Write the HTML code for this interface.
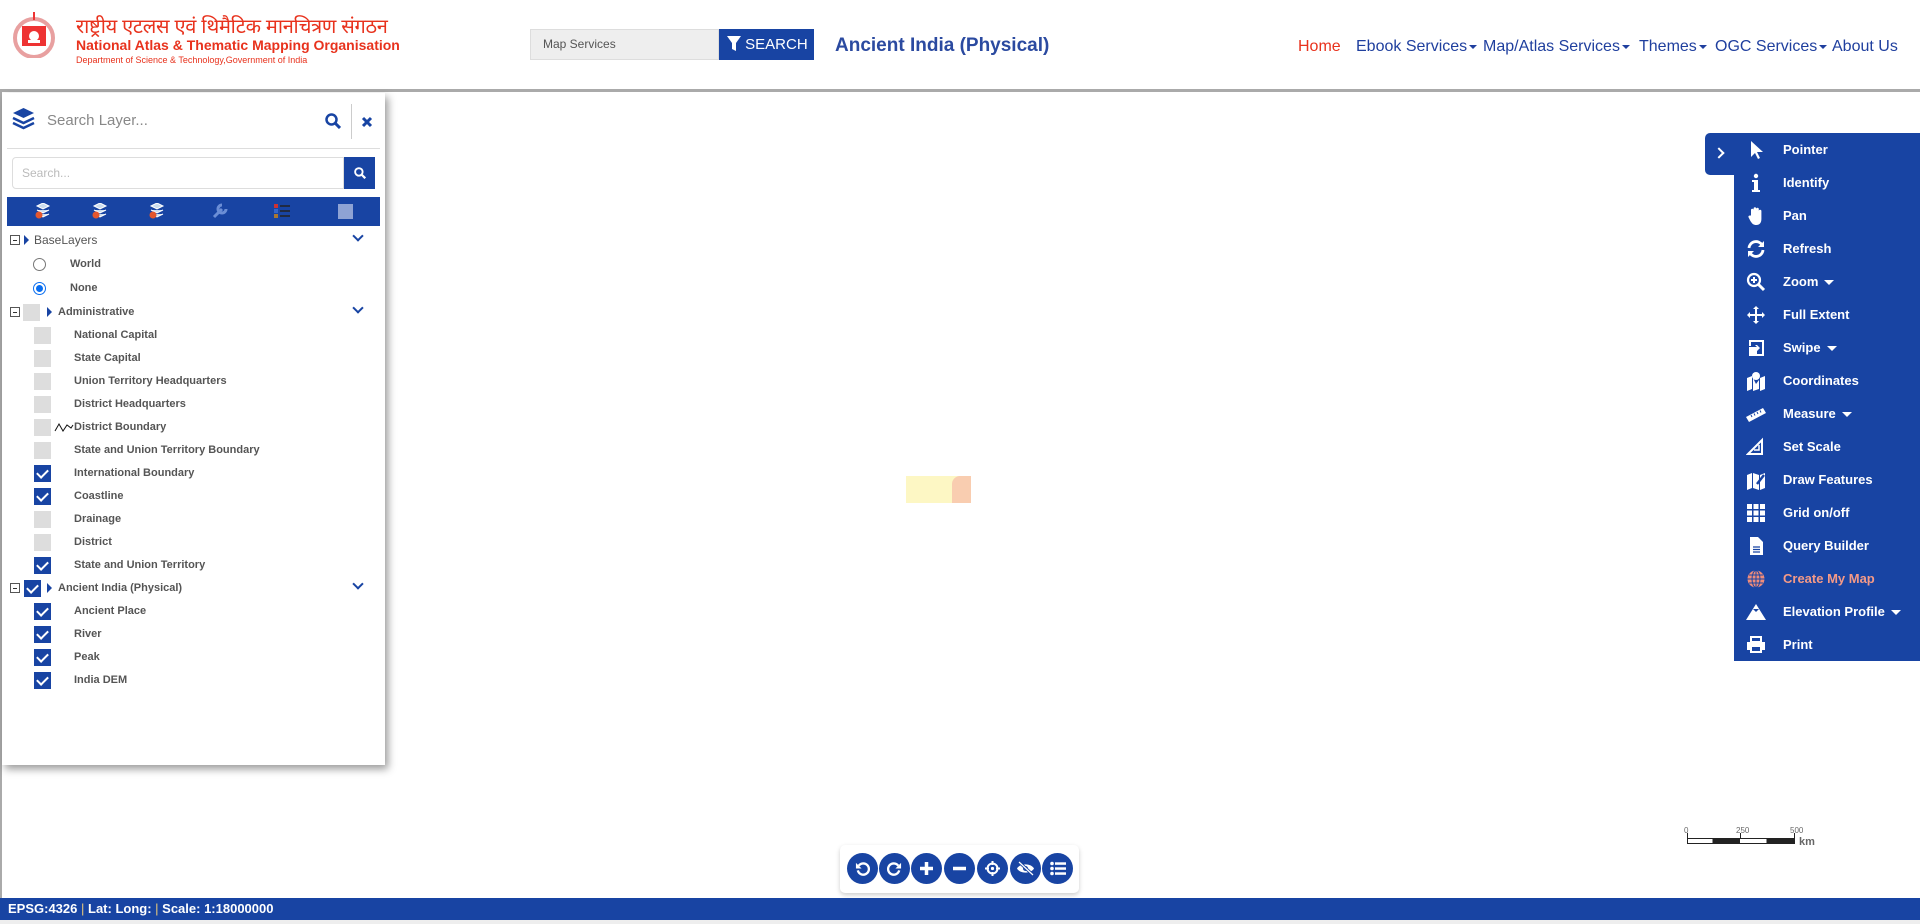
<!DOCTYPE html>
<html><head><meta charset="utf-8"><style>
*{box-sizing:border-box;margin:0;padding:0}
body{width:1920px;height:924px;overflow:hidden;background:#fff;font-family:"Liberation Sans",sans-serif;position:relative}
.a{position:absolute}
.blue{background:#1844a3}
.nav{position:absolute;top:38px;font-size:16px;color:#1f3f9e;white-space:nowrap}
.tri{display:inline-block;width:0;height:0;border-left:4px solid transparent;border-right:4px solid transparent;border-top:4px solid #1f3f9e;vertical-align:middle;margin-left:2px}
.row{position:absolute;left:0;width:380px;height:22px;font-size:11px;font-weight:bold;color:#555;line-height:22px}
.cb{position:absolute;left:32px;top:3px;width:17px;height:17px;background:#ddd}
.cb.on{background:#1844a3}
.cb.on:after{content:"";position:absolute;left:5px;top:2px;width:5px;height:9px;border:solid #fff;border-width:0 2px 2px 0;transform:rotate(45deg)}
.row .t{position:absolute;left:72px}
.mn{position:absolute;left:12px;top:6px;width:10px;height:10px;border:1px solid #555;background:#fff}
.mn:after{content:"";position:absolute;left:2px;top:3.5px;width:4px;height:1px;background:#333}
.ar{position:absolute;width:0;height:0;border-top:5px solid transparent;border-bottom:5px solid transparent;border-left:5px solid #1844a3;top:6px}
.chev{position:absolute;left:352px;top:3px;width:8px;height:8px;border:solid #1844a3;border-width:0 2.5px 2.5px 0;transform:rotate(45deg)}
.ti{position:absolute;left:0;width:186px;height:33px;color:#fff;font-size:13px;font-weight:bold;line-height:33px}
.ti .l{position:absolute;left:49px}
.ti .ic{position:absolute;left:12px;top:7px;width:20px;height:20px}
.wt{display:inline-block;width:0;height:0;border-left:5px solid transparent;border-right:5px solid transparent;border-top:5px solid #fff;vertical-align:middle;margin-left:6px}
.cir{position:absolute;top:853px;width:31px;height:31px;border-radius:50%;background:#1844a3}
</style></head><body>
<svg class="a" style="left:12px;top:10px" width="44" height="48" viewBox="0 0 44 48"><circle cx="22" cy="28" r="19" fill="none" stroke="#e8a0a0" stroke-width="4"/><rect x="21" y="2" width="2" height="8" fill="#e33"/><path d="M10 16h24v20h-24z" fill="#e33"/><circle cx="22" cy="26" r="5" fill="#fff"/><rect x="16" y="30" width="12" height="3" fill="#fff"/></svg>
<div class="a" style="left:76px;top:12px;font-size:20px;color:#e8321d;font-family:'Liberation Sans','Noto Sans CJK SC',sans-serif;white-space:nowrap;letter-spacing:-0.3px">राष्ट्रीय एटलस एवं थिमैटिक मानचित्रण संगठन</div>
<div class="a" style="left:76px;top:37px;font-size:14px;font-weight:bold;color:#e8321d;white-space:nowrap">National Atlas &amp; Thematic Mapping Organisation</div>
<div class="a" style="left:76px;top:55px;font-size:9px;color:#e8321d;white-space:nowrap">Department of Science &amp; Technology,Government of India</div>
<div class="a" style="left:530px;top:29px;width:189px;height:31px;background:#eee;border:1px solid #ddd;font-size:12px;color:#555;line-height:29px;padding-left:12px">Map Services</div>
<div class="a blue" style="left:719px;top:29px;width:95px;height:31px;color:#fff;font-size:15px;line-height:31px;padding-left:8px"><svg width="14" height="15" viewBox="0 0 14 15" style="vertical-align:-2px"><path d="M0 0h14l-5 7v8l-4-2v-6z" fill="#fff"/></svg> SEARCH</div>
<div class="a" style="left:835px;top:35px;font-size:19px;font-weight:bold;color:#2b4aa0;white-space:nowrap">Ancient India (Physical)</div>
<div class="nav" style="left:1298px;color:#e8321d">Home</div>
<div class="nav" style="left:1356px">Ebook Services<span class="tri"></span></div>
<div class="nav" style="left:1483px">Map/Atlas Services<span class="tri"></span></div>
<div class="nav" style="left:1639px">Themes<span class="tri"></span></div>
<div class="nav" style="left:1715px">OGC Services<span class="tri"></span></div>
<div class="nav" style="left:1832px">About Us</div>
<div class="a" style="left:0;top:89px;width:1920px;height:3px;background:#aaa"></div>
<div class="a" style="left:0;top:92px;width:2px;height:808px;background:#aaa"></div>
<div class="a" style="left:906px;top:476px;width:65px;height:27px;background:#fdf7c4"></div>
<div class="a" style="left:952px;top:476px;width:19px;height:27px;background:#f9cdb0;border-radius:8px 0 0 0"></div>
<div class="a" style="left:2px;top:93px;width:383px;height:672px;background:#fff;box-shadow:3px 4px 8px rgba(0,0,0,.4)">
 <svg class="a" style="left:10px;top:14px" width="23" height="24" viewBox="0 0 23 24"><path d="M11.5 1L22 6l-10.5 5L1 6z" fill="#1844a3"/><path d="M1 11l10.5 5 10.5-5M1 16l10.5 5 10.5-5" fill="none" stroke="#1844a3" stroke-width="2.5"/></svg>
 <div class="a" style="left:45px;top:19px;font-size:15px;color:#888">Search Layer...</div>
 <svg class="a" style="left:323px;top:20px" width="16" height="16" viewBox="0 0 16 16"><circle cx="6.5" cy="6.5" r="5" fill="none" stroke="#1844a3" stroke-width="2.5"/><path d="M10 10l5 5" stroke="#1844a3" stroke-width="3"/></svg>
 <div class="a" style="left:349px;top:11px;width:1px;height:35px;background:#ccc"></div>
 <svg class="a" style="left:359px;top:23px" width="12" height="12"><path d="M2 2l8 8M10 2l-8 8" stroke="#1844a3" stroke-width="3"/></svg>
 <div class="a" style="left:5px;top:55px;width:373px;height:1px;background:#ddd"></div>
 <div class="a" style="left:10px;top:64px;width:332px;height:32px;border:1px solid #ddd;border-radius:4px 0 0 4px;font-size:12px;color:#bbb;line-height:30px;padding-left:9px">Search...</div>
 <div class="a blue" style="left:342px;top:64px;width:31px;height:32px"><svg class="a" style="left:10px;top:10px" width="12" height="12" viewBox="0 0 16 16"><circle cx="6.5" cy="6.5" r="5" fill="none" stroke="#fff" stroke-width="2.5"/><path d="M10 10l5 5" stroke="#fff" stroke-width="3"/></svg></div>
 <div class="a blue" style="left:5px;top:104px;width:373px;height:29px">
  <svg class="a" style="left:28px;top:6px" width="16" height="16"><path d="M2 3l6-3 6 3-6 3z M2 7l6 3 6-3 M2 11l6 3 6-3" fill="#cde" stroke="#fff"/><circle cx="4" cy="12" r="3.5" fill="#e4572e"/></svg>
  <svg class="a" style="left:85px;top:6px" width="16" height="16"><path d="M2 3l6-3 6 3-6 3z M2 7l6 3 6-3 M2 11l6 3 6-3" fill="#cde" stroke="#fff"/><circle cx="4" cy="12" r="3.5" fill="#e4572e"/></svg>
  <svg class="a" style="left:142px;top:6px" width="16" height="16"><path d="M2 3l6-3 6 3-6 3z M2 7l6 3 6-3 M2 11l6 3 6-3" fill="#cde" stroke="#fff"/><circle cx="4" cy="12" r="3.5" fill="#e4572e"/></svg>
  <svg class="a" style="left:205px;top:6px" width="16" height="16"><path d="M2 14l8-8M10 2a4 4 0 1 0 4 4" stroke="#6b8ed6" stroke-width="3" fill="none"/></svg>
  <svg class="a" style="left:267px;top:6px" width="16" height="16"><rect x="0" y="1" width="4" height="4" fill="#c33"/><rect x="0" y="6" width="4" height="4" fill="#36c"/><rect x="0" y="11" width="4" height="4" fill="#a73"/><path d="M6 3h10M6 8h10M6 13h10" stroke="#222" stroke-width="1.5"/></svg>
  <div class="a" style="left:331px;top:7px;width:15px;height:15px;background:#8ea3d4"></div>
 </div>
 <div class="row" style="top:136px"><div class="mn" style="left:8px"></div><div class="ar" style="left:22px"></div><span class="t" style="left:32px;color:#555;font-weight:normal;font-size:12px">BaseLayers</span><div class="chev"></div></div>
 <div class="row" style="top:160px"><div class="a" style="left:31px;top:5px;width:13px;height:13px;border:1px solid #777;border-radius:50%"></div><span class="t" style="left:68px">World</span></div>
 <div class="row" style="top:184px"><div class="a" style="left:31px;top:5px;width:13px;height:13px;border:1px solid #0a6ef0;border-radius:50%"><div class="a" style="left:2px;top:2px;width:7px;height:7px;border-radius:50%;background:#0a6ef0"></div></div><span class="t" style="left:68px">None</span></div>
 <div class="row" style="top:208px"><div class="mn" style="left:8px"></div><div class="cb" style="left:21px"></div><div class="ar" style="left:45px"></div><span class="t" style="left:56px">Administrative</span><div class="chev"></div></div>
 <div class="row" style="top:231px"><div class="cb"></div><span class="t">National Capital</span></div>
 <div class="row" style="top:254px"><div class="cb"></div><span class="t">State Capital</span></div>
 <div class="row" style="top:277px"><div class="cb"></div><span class="t">Union Territory Headquarters</span></div>
 <div class="row" style="top:300px"><div class="cb"></div><span class="t">District Headquarters</span></div>
 <div class="row" style="top:323px"><div class="cb"></div><svg class="a" style="left:52px;top:6px" width="20" height="10"><path d="M1 9l4-7 4 7 4-6 4 3 2-3" fill="none" stroke="#111"/></svg><span class="t">District Boundary</span></div>
 <div class="row" style="top:346px"><div class="cb"></div><span class="t">State and Union Territory Boundary</span></div>
 <div class="row" style="top:369px"><div class="cb on"></div><span class="t">International Boundary</span></div>
 <div class="row" style="top:392px"><div class="cb on"></div><span class="t">Coastline</span></div>
 <div class="row" style="top:415px"><div class="cb"></div><span class="t">Drainage</span></div>
 <div class="row" style="top:438px"><div class="cb"></div><span class="t">District</span></div>
 <div class="row" style="top:461px"><div class="cb on"></div><span class="t">State and Union Territory</span></div>
 <div class="row" style="top:484px"><div class="mn" style="left:8px"></div><div class="cb on" style="left:22px"></div><div class="ar" style="left:45px"></div><span class="t" style="left:56px">Ancient India (Physical)</span><div class="chev"></div></div>
 <div class="row" style="top:507px"><div class="cb on"></div><span class="t">Ancient Place</span></div>
 <div class="row" style="top:530px"><div class="cb on"></div><span class="t">River</span></div>
 <div class="row" style="top:553px"><div class="cb on"></div><span class="t">Peak</span></div>
 <div class="row" style="top:576px"><div class="cb on"></div><span class="t">India DEM</span></div>
</div>
<div class="a blue" style="left:1705px;top:133px;width:40px;height:42px;border-radius:5px 0 0 5px"><div class="a" style="left:10px;top:16px;width:8px;height:8px;border:solid #fff;border-width:2.5px 2.5px 0 0;transform:rotate(45deg)"></div></div>
<div class="a blue" style="left:1734px;top:133px;width:186px;height:528px">
 <div class="ti" style="top:0"><svg class="ic" viewBox="0 0 20 20"><path d="M5 1v16l4-4 3 6 2-1-3-6h6z" fill="#fff"/></svg><span class="l">Pointer</span></div>
 <div class="ti" style="top:33px"><svg class="ic" viewBox="0 0 20 20"><circle cx="10" cy="3" r="2.2" fill="#fff"/><path d="M6 7h6v10h2v2H6v-2h2V9H6z" fill="#fff"/></svg><span class="l">Identify</span></div>
 <div class="ti" style="top:66px"><svg class="ic" viewBox="0 0 20 20"><path d="M5 9V4a1.3 1.3 0 0 1 2.6 0v5V2.5a1.3 1.3 0 0 1 2.6 0V9V3a1.3 1.3 0 0 1 2.6 0v6V5a1.3 1.3 0 0 1 2.6 0v8c0 4-2 6-5 6s-4-1-6-4l-2-4a1.3 1.3 0 0 1 2-1.3z" fill="#fff"/></svg><span class="l">Pan</span></div>
 <div class="ti" style="top:99px"><svg class="ic" viewBox="0 0 20 20"><path d="M3 9a7 7 0 0 1 13-3M17 11a7 7 0 0 1-13 3" fill="none" stroke="#fff" stroke-width="2.8"/><path d="M18 2v6h-6zM2 18v-6h6z" fill="#fff"/></svg><span class="l">Refresh</span></div>
 <div class="ti" style="top:132px"><svg class="ic" viewBox="0 0 20 20"><circle cx="8" cy="8" r="6" fill="none" stroke="#fff" stroke-width="2.2"/><path d="M5 8h6M8 5v6" stroke="#fff" stroke-width="2"/><path d="M12 12l6 6" stroke="#fff" stroke-width="3"/></svg><span class="l">Zoom<span class="wt"></span></span></div>
 <div class="ti" style="top:165px"><svg class="ic" viewBox="0 0 20 20"><path d="M10 1l3 3h-2v5h5V7l3 3-3 3v-2h-5v5h2l-3 3-3-3h2v-5H4v2l-3-3 3-3v2h5V4H7z" fill="#fff"/></svg><span class="l">Full Extent</span></div>
 <div class="ti" style="top:198px"><svg class="ic" viewBox="0 0 20 20"><path d="M3 2h15v16H3v-6h2v4h11V4H5v4H3z" fill="#fff"/><path d="M3 9h8l-2-2h2l3 3-3 3H9l2-2H3z" fill="#fff"/><rect x="3" y="11" width="8" height="7" fill="#fff"/></svg><span class="l">Swipe<span class="wt"></span></span></div>
 <div class="ti" style="top:231px"><svg class="ic" viewBox="0 0 20 20"><path d="M1 7l5-2v13l-5 2zM14 7l5-2v13l-5 2zM7 7v13l6-2V9l-3 4z" fill="#fff"/><circle cx="10" cy="5" r="4" fill="#fff"/></svg><span class="l">Coordinates</span></div>
 <div class="ti" style="top:264px"><svg class="ic" viewBox="0 0 20 20"><path d="M0 13L17 4l3 5-17 9z" fill="#fff"/><path d="M5 11l1 2M8 9.5l1 2M11 8l1 2M14 6.5l1 2" stroke="#1844a3"/></svg><span class="l">Measure<span class="wt"></span></span></div>
 <div class="ti" style="top:297px"><svg class="ic" viewBox="0 0 20 20"><path d="M2 17L16 3v14z" fill="none" stroke="#fff" stroke-width="2"/><path d="M8 13h5v-5" fill="none" stroke="#fff" stroke-width="1.5"/></svg><span class="l">Set Scale</span></div>
 <div class="ti" style="top:330px"><svg class="ic" viewBox="0 0 20 20"><path d="M1 5l5-2v15l-5 2zM7 3l6 2v15l-6-2zM14 5l5-2v15l-5 2z" fill="#fff"/><path d="M11 14l7-9" stroke="#1844a3" stroke-width="2.5"/></svg><span class="l">Draw Features</span></div>
 <div class="ti" style="top:363px"><svg class="ic" viewBox="0 0 20 20"><g fill="#fff"><rect x="1" y="1" width="5" height="5"/><rect x="7.5" y="1" width="5" height="5"/><rect x="14" y="1" width="5" height="5"/><rect x="1" y="7.5" width="5" height="5"/><rect x="7.5" y="7.5" width="5" height="5"/><rect x="14" y="7.5" width="5" height="5"/><rect x="1" y="14" width="5" height="5"/><rect x="7.5" y="14" width="5" height="5"/><rect x="14" y="14" width="5" height="5"/></g></svg><span class="l">Grid on/off</span></div>
 <div class="ti" style="top:396px"><svg class="ic" viewBox="0 0 20 20"><path d="M4 1h8l5 5v13H4z" fill="#fff"/><path d="M7 11h7M7 13.5h7M7 16h7" stroke="#1844a3" stroke-width="1.2"/></svg><span class="l">Query Builder</span></div>
 <div class="ti" style="top:429px;color:#f49a87"><svg class="ic" viewBox="0 0 20 20"><circle cx="10" cy="10" r="8.5" fill="#f08c7a"/><path d="M1.5 10h17M10 1.5v17M3 6h14M3 14h14" stroke="#1844a3" stroke-width="1"/><ellipse cx="10" cy="10" rx="4" ry="8.5" fill="none" stroke="#1844a3"/></svg><span class="l">Create My Map</span></div>
 <div class="ti" style="top:462px"><svg class="ic" viewBox="0 0 20 20" style="width:24px;left:10px"><path d="M0 18L10 2l10 16z" fill="#fff"/><path d="M7 7l3 3 3-3" fill="#1844a3"/></svg><span class="l">Elevation Profile<span class="wt"></span></span></div>
 <div class="ti" style="top:495px"><svg class="ic" viewBox="0 0 20 20"><path d="M5 2h10v5H5z" fill="none" stroke="#fff" stroke-width="2"/><path d="M1 7h18v8h-3v3H4v-3H1z" fill="#fff"/><rect x="6" y="12" width="8" height="4" fill="#1844a3"/></svg><span class="l">Print</span></div>
</div>
<div class="a" style="left:1684px;top:826px;font-size:8px;color:#666">0</div>
<div class="a" style="left:1736px;top:826px;font-size:8px;color:#666">250</div>
<div class="a" style="left:1790px;top:826px;font-size:8px;color:#666">500</div>
<div class="a" style="left:1687px;top:838px;width:108px;height:6px;border:1px solid #222;background:linear-gradient(90deg,#fff 0 23%,#222 23% 49%,#fff 49% 74%,#222 74%)"></div>
<div class="a" style="left:1687px;top:833px;width:1px;height:6px;background:#222"></div><div class="a" style="left:1740px;top:833px;width:1px;height:6px;background:#222"></div><div class="a" style="left:1794px;top:833px;width:1px;height:6px;background:#222"></div>
<div class="a" style="left:1799px;top:836px;font-size:11px;font-weight:bold;color:#666">km</div>
<div class="a" style="left:840px;top:845px;width:239px;height:48px;background:#fff;border-radius:5px;box-shadow:0 2px 5px rgba(0,0,0,.2)"></div>
<div class="cir" style="left:847px"><svg class="a" style="left:8px;top:8px" width="15" height="15" viewBox="0 0 16 16"><path d="M4 5a6 6 0 1 1 -1 5" fill="none" stroke="#fff" stroke-width="2.5"/><path d="M1 2v6h6z" fill="#fff"/></svg></div>
<div class="cir" style="left:879px"><svg class="a" style="left:8px;top:8px" width="15" height="15" viewBox="0 0 16 16"><path d="M12 5a6 6 0 1 0 1 5" fill="none" stroke="#fff" stroke-width="2.5"/><path d="M15 2v6h-6z" fill="#fff"/></svg></div>
<div class="cir" style="left:911px"><svg class="a" style="left:8px;top:8px" width="15" height="15"><path d="M7.5 1v13M1 7.5h13" stroke="#fff" stroke-width="3.5"/></svg></div>
<div class="cir" style="left:944px"><svg class="a" style="left:8px;top:8px" width="15" height="15"><path d="M1 7.5h13" stroke="#fff" stroke-width="3.5"/></svg></div>
<div class="cir" style="left:977px"><svg class="a" style="left:7px;top:7px" width="17" height="17"><circle cx="8.5" cy="8.5" r="5" fill="none" stroke="#fff" stroke-width="2"/><circle cx="8.5" cy="8.5" r="1.6" fill="#fff"/><path d="M8.5 1v4M8.5 12v4M1 8.5h4M12 8.5h4" stroke="#fff" stroke-width="2"/></svg></div>
<div class="cir" style="left:1010px"><svg class="a" style="left:6px;top:8px" width="19" height="15"><path d="M1 7.5C4 2 15 2 18 7.5 15 13 4 13 1 7.5z" fill="#fff"/><circle cx="9.5" cy="7.5" r="2.5" fill="#1844a3"/><path d="M3 1l14 13" stroke="#1844a3" stroke-width="3"/><path d="M3 1l14 13" stroke="#fff" stroke-width="1.2"/></svg></div>
<div class="cir" style="left:1042px"><svg class="a" style="left:8px;top:8px" width="16" height="15"><g fill="#fff"><circle cx="2" cy="2.5" r="1.8"/><circle cx="2" cy="7.5" r="1.8"/><circle cx="2" cy="12.5" r="1.8"/><rect x="5" y="1.3" width="11" height="2.5"/><rect x="5" y="6.3" width="11" height="2.5"/><rect x="5" y="11.3" width="11" height="2.5"/></g></svg></div>
<div class="a blue" style="left:0;top:898px;width:1920px;height:22px;color:#fff;font-size:13px;font-weight:bold;line-height:22px;padding-left:8px">EPSG:4326 <span style="color:#e8c77a;font-weight:normal">|</span> Lat: Long: <span style="color:#e8c77a;font-weight:normal">|</span> Scale: 1:18000000</div>
<div class="a" style="left:0;top:920px;width:1920px;height:4px;background:#eee"></div>
</body></html>
